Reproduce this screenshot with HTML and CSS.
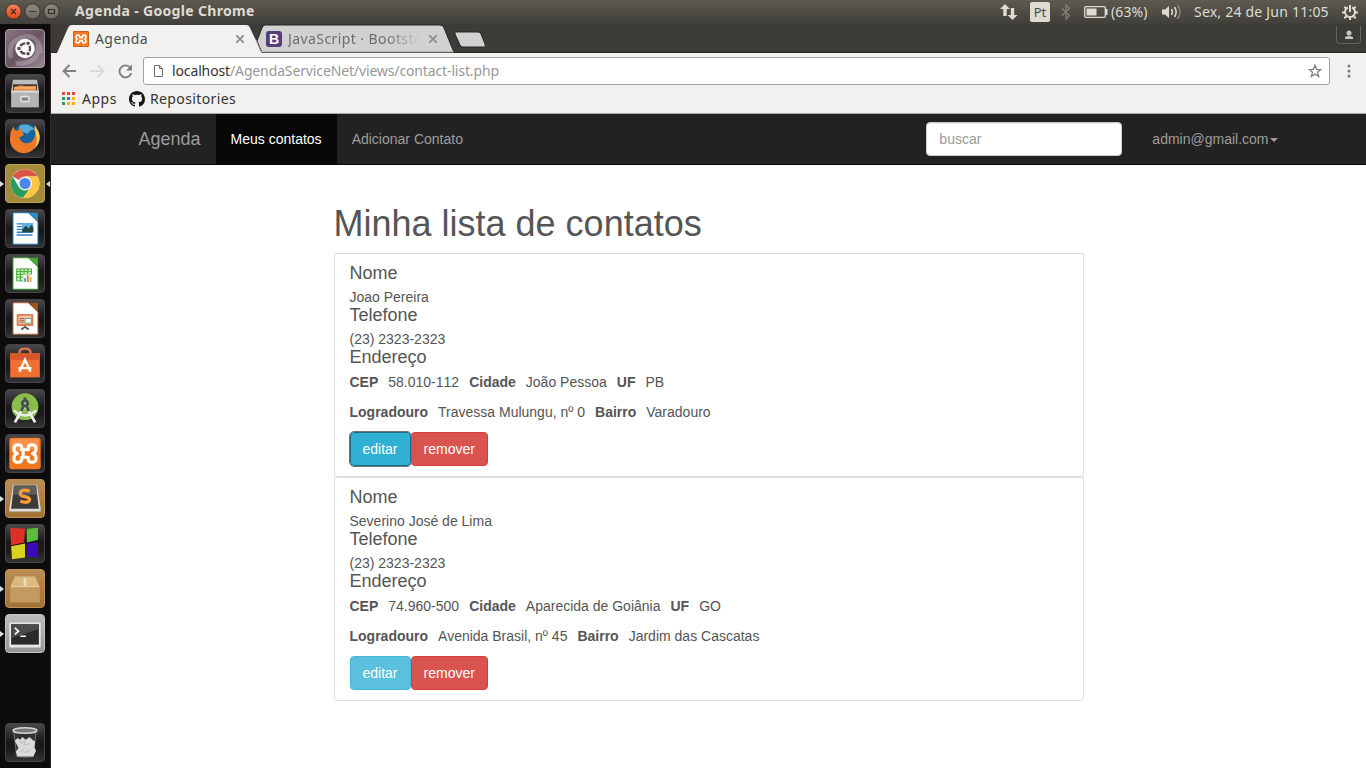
FILE: index.html
```html
<!DOCTYPE html>
<html lang="pt-BR">
<head>
<meta charset="utf-8">
<title>Agenda</title>
<link rel="stylesheet" href="styles.css">
</head>
<body>
<header class="panel">
  <div class="window-buttons">
    <svg width="60" height="24" viewBox="0 0 60 24">
      <defs><linearGradient id="gr" x2="0" y2="1"><stop stop-color="#8b8981"/><stop offset="1" stop-color="#6a6861"/></linearGradient>
      <linearGradient id="rd" x2="0" y2="1"><stop stop-color="#f58563"/><stop offset="1" stop-color="#de4514"/></linearGradient></defs>
      <circle cx="13.500" cy="11.500" r="7.700" fill="url(#rd)" stroke="#33322d"/>
      <circle cx="32.500" cy="11.500" r="7.700" fill="url(#gr)" stroke="#33322d"/>
      <circle cx="51.500" cy="11.500" r="7.700" fill="url(#gr)" stroke="#33322d"/>
      <path d="M11 9l5 5M16 9l-5 5M29.500 11.500h6.500M48.500 9.500h6v4h-6z" fill="none" stroke="#3b2b25" stroke-width="1.200"/>
    </svg>
  </div>
  <div class="window-title">Agenda - Google Chrome</div>
  <div class="indicators">
    <svg width="18" height="16" viewBox="0 0 18 16" fill="#dfdbd2"><path d="M5 0l5 5H6.700v7H3.300V5H0zM12.500 16l-5-5h3.300V4h3.400v7H17.500z"/></svg>
    <span class="keyboard">Pt</span>
    <svg class="bluetooth" width="12" height="16" viewBox="0 0 12 16" fill="none" stroke="#85837a" stroke-width="1.200"><path d="M2 4.500l7.500 7L6 15V1l3.500 3.500-7.500 7"/></svg>
    <svg class="battery" width="24" height="12" viewBox="0 0 24 12"><rect x=".7" y=".7" width="20.600" height="10.600" rx="1" fill="none" stroke="#dfdbd2" stroke-width="1.300"/><path d="M2.500 2.500h10v7h-10zM21 3h2.500v6H21z" fill="#dfdbd2"/></svg>
    <span class="percent">(63%)</span>
    <svg class="sound" width="20" height="16" viewBox="0 0 20 16" fill="none" stroke="#dfdbd2" stroke-width="1.500"><path d="M0 5.500h3L7 2v12l-4-3.500H0z" fill="#dfdbd2" stroke="none"/><path d="M9.500 5q1.700 3 0 6M12.500 3q3.300 5 0 10"/><path d="M15.500 1q5 7 0 14" stroke="#85837a"/></svg>
    <span class="clock">Sex, 24 de Jun 11:05</span>
    <svg width="16" height="16" viewBox="0 0 16 16" fill="none" stroke="#dfdbd2"><path d="M6 3.500a5 5 0 1 0 4 0" stroke-width="2"/><path d="M8 1v7" stroke-width="2"/><path d="M8 13v3M0 8.500h3M13 8.500h3M2.300 2.800l2 2M13.700 2.800l-2 2M2.300 14.200l2-2M13.700 14.200l-2-2" stroke-width="2"/></svg>
  </div>
</header>
<div class="desktop">
<nav class="launcher">
  <div class="tile tile-dash"><svg viewBox="0 0 40 40"><path d="M5 30Q0 12 20 7Q35 5 37 25M10 36Q37 37 34 15" fill="none" stroke="#fff" stroke-opacity=".22" stroke-width="5"/><circle cx="20" cy="20" r="10.500" fill="#fff"/><circle cx="20" cy="20" r="5.500" fill="none" stroke="#594653" stroke-width="2.600"/><g fill="#594653" stroke="#fff" stroke-width="1.200"><circle cx="13.500" cy="20" r="2.500"/><circle cx="23.300" cy="14.300" r="2.500"/><circle cx="23.300" cy="25.700" r="2.500"/></g></svg></div>
  <div class="tile"><svg viewBox="0 0 40 40"><path d="M7 5h26l2 12H5z" fill="#bdbdbb"/><path d="M7 10h26v8H7z" fill="#423b35"/><path d="M8 13l8-2 3 1h13v6H8z" fill="#e98c45"/><path d="M9 14h22" stroke="#ffd29b"/><path d="M5 17h30v18H5z" fill="#b3b3b1"/><path d="M5 17h30v2H5z" fill="#ddd"/><rect x="15.500" y="23" width="9" height="6" rx="1.500" fill="#aaa" stroke="#fff"/><path d="M17 26h6" stroke="#555"/></svg></div>
  <div class="tile"><svg viewBox="0 0 40 40"><circle cx="21" cy="19" r="15" fill="#17629c"/><path d="M14 6q10-4 17 5-5-2-8 4-5-3-10 0z" fill="#57aad6"/><path d="M32 8q8 12-1 22-7 8-17 5Q2 30 4 17q0-6 4-10 0 4 3 5 3-3 6-2-1 4 2 6l-5 3q1 5 6 6 6 1 9-4 4-6 0-13 3 2 4 6 1-6-3-10z" fill="#ed7827"/><path d="M30 6q11 12 1 24 3-8 1-14-1-5-2-10z" fill="#ffd553"/></svg></div>
  <div class="tile tile-chrome running active"><svg viewBox="0 0 40 40"><circle cx="20" cy="20" r="15.500" fill="#fff"/><path d="M20 20L6.600 12.300A15.500 15.500 0 0 1 33.400 12.300H20z" fill="#dc5548"/><path d="M6.600 12.300A15.500 15.500 0 0 0 18 35.400L26.500 23.500 13.500 23.800z" fill="#279e5c"/><path d="M33.400 12.300A15.500 15.500 0 0 1 18 35.400L26.700 23.800 20 12.300z" fill="#fcc642"/><circle cx="20" cy="20" r="7.600" fill="#f3f1e9"/><circle cx="20" cy="20" r="6" fill="#4b86ed"/></svg></div>
  <div class="tile"><svg viewBox="0 0 40 40"><path d="M7 3h17l10 10v24H7z" fill="#fff" stroke="#1679b8"/><path d="M23 3h11v10z" fill="#2e8bbe"/><path d="M11 15h8M11 18h8M11 21h8M11 24h17M11 27h17" stroke="#2d82bd" stroke-width="1.500"/><path d="M17 14h12v10H17z" fill="#5cb2df"/><path d="M17 21l4-4 3 3 3-4 2 3v5H17z" fill="#234543"/></svg></div>
  <div class="tile"><svg viewBox="0 0 40 40"><path d="M7 3h17l10 10v24H7z" fill="#fff" stroke="#32a023"/><path d="M23 3h11v10z" fill="#49a935"/><path d="M11 15h16v12H11z" fill="#d4efc4"/><path d="M11 15h16v13H11zM15 15v13M19 15v13M23 15v13M11 18h16M11 21h16M11 24h16" fill="none" stroke="#38a32b"/><path d="M18 21h10v9H18z" fill="#eef7fb"/><path d="M20 25v4" stroke="#4799d1" stroke-width="2"/><path d="M23 22v7" stroke="#e27a30" stroke-width="2"/><path d="M26 24v5" stroke="#d9b437" stroke-width="2"/></svg></div>
  <div class="tile"><svg viewBox="0 0 40 40"><path d="M7 3h17l10 10v24H7z" fill="#fff" stroke="#bd602f"/><path d="M23 3h11v10z" fill="#a34c20"/><path d="M12 16h16v11H12z" fill="#f4c3a8" stroke="#d78158" stroke-width="2"/><path d="M14 20h5M14 22h5M14 24h5" stroke="#ae5e39"/><path d="M20 20h7v5h-7z" fill="#fff" stroke="#5d9f7b"/><path d="M20 28v2M16 32l4-3 4 3" fill="none" stroke="#555" stroke-width="2"/></svg></div>
  <div class="tile"><svg viewBox="0 0 40 40"><path d="M14 14V8q0-4 6-4t6 4v6" fill="none" stroke="#df7452" stroke-width="2.500"/><path d="M4 9h32v26H4z" fill="#ef7132"/><path d="M4 9h32v7H4z" fill="#d9562b"/><path d="M14 29l6-13 6 13M13 25h14" fill="none" stroke="#fff" stroke-width="2.600"/></svg></div>
  <div class="tile"><svg viewBox="0 0 40 40"><circle cx="20" cy="18" r="14.500" fill="#8abd4b"/><path d="M19 18L9 35M21 18l10 17" stroke="#eee" stroke-width="3"/><path d="M8 22q12 11 24 0" fill="none" stroke="#ededed" stroke-width="2.500"/><circle cx="20" cy="14.500" r="3" fill="#9cbd71" stroke="#43504b" stroke-width="3"/><path d="M20 8v3M18 18l-2 5M22 18l2 5" stroke="#43504b" stroke-width="3"/></svg></div>
  <div class="tile"><svg viewBox="0 0 40 40"><rect x="3" y="3" width="34" height="34" rx="3" fill="#f37620"/><path d="M5 4h30v11q-15 1-30 4z" fill="#ffac70" opacity=".5"/><path d="M16.500 16v-2q0-3.500-3.500-3.500-5 0-5 4.500 0 4 4 5-4 1-4 5 0 4.500 5 4.500 3.500 0 3.500-3.500v-2h7v2q0 3.500 3.500 3.500 5 0 5-4.500 0-4-4-5 4-1 4-5 0-4.500-5-4.500-3.500 0-3.500 3.500v2zM18 17v6" fill="none" stroke="#fff" stroke-width="3.400" stroke-linejoin="round"/></svg></div>
  <div class="tile tile-sublime running"><svg viewBox="0 0 40 40"><path d="M7 5h26l4 26v3H3v-3z" fill="#ddd"/><path d="M8 6h24l3 25H5z" fill="#3b3b3a"/><path d="M8 6h24l1 10H7z" fill="#5d5d5b"/><path d="M25 12q-10-3-10 3 0 2 5 3t5 3q-1 5-10 2" fill="none" stroke="#ff9b36" stroke-width="3.500"/></svg></div>
  <div class="tile"><svg viewBox="0 0 40 40"><path d="M4 3l16 1-1 15-14 3z" fill="#df3027"/><path d="M22 4l12-1v13l-12 3z" fill="#58be3b"/><path d="M5 23l15-3v15L6 37z" fill="#d9d122"/><path d="M22 20l12-1v16l-12-1z" fill="#3a08bd"/></svg></div>
  <div class="tile tile-box running"><svg viewBox="0 0 40 40"><path d="M9 7h22l5 12v16H4V19z" fill="#c69b61"/><path d="M9 7h22l5 11H4z" fill="#dab880"/><path d="M5 18h30" stroke="#ecd5aa"/><path d="M5 19h30v15H5z" fill="#c59a60"/><path d="M18.500 9h3v9l-1.500-1-1.500 1z" fill="#eddcbd"/></svg></div>
  <div class="tile tile-terminal running"><svg viewBox="0 0 40 40"><rect x="3" y="8" width="34" height="27" rx="1" fill="#e6e6e6"/><path d="M5 10h30v22H5z" fill="#292b2b"/><path d="M5 10h30v5L5 25z" fill="#4b4d4c"/><path d="M9 14l4 3.500-4 3.500M15 23h6" fill="none" stroke="#fff" stroke-width="1.700"/></svg></div>
  <div class="tile tile-trash"><svg viewBox="0 0 40 40"><path d="M8 8h24l-3 27q-9 2-18 0z" fill="#303232" stroke="#777978"/><path d="M9 18l3-3 3 2 2-3 4 3 4-3 3 3 3 2-1 6 2 4-3 6H12l-2-5 3-4z" fill="#dadada"/><path d="M14 18l2 3 4-3-1 5 7-2M14 30l4-2 2 3 6-3" fill="none" stroke="#bbb"/><ellipse cx="20" cy="7" rx="13" ry="3" fill="#777978" stroke="#d5d5d5" stroke-width="1.600"/></svg></div>
</nav>
<main class="browser">
  <div class="tabstrip">
    <svg class="tab-shapes" width="1315" height="29" viewBox="51 24 1315 29">
      <path d="M51 52.500h1315" stroke="#292824"/>
      <path d="M257 41l5-13q1-3 3-3h175q3 0 4 3l10 24.500H262z" fill="#d3d1cf" stroke="#292824"/>
      <path d="M455 32h23q2 0 3 2l4 10q1 3-1 3h-21q-2 0-3-2l-5-11z" fill="#d3d1cf" stroke="#292824"/>
      <path d="M57 53l11-25q1-3 4-3h174q3 0 4 3l12 25z" fill="#f2f1f0"/>
      <path d="M256 40l5 12h193" fill="none" stroke="#a09e9b"/>
    </svg>
    <div class="tab tab-current">
      <svg width="16" height="16" viewBox="0 0 40 40"><rect width="40" height="40" rx="3" fill="#c9590f"/><rect x="2" y="2" width="36" height="36" fill="#f47a25"/><path d="M16.500 16v-2q0-4-4-4-5 0-5 5 0 4 4 5-4 1-4 5 0 5 5 5 4 0 4-4v-2h7v2q0 4 4 4 5 0 5-5 0-4-4-5 4-1 4-5 0-5-5-5-4 0-4 4v2z" fill="none" stroke="#fff" stroke-width="4"/></svg>
      <span class="tab-label">Agenda</span>
      <svg class="close" width="8" height="8" viewBox="0 0 8 8"><path d="M0 0l8 8M8 0L0 8"/></svg>
    </div>
    <div class="tab tab-other">
      <span class="bootstrap-icon">B</span>
      <span class="tab-label faded">JavaScript · Bootstr</span>
      <svg class="close" width="8" height="8" viewBox="0 0 8 8"><path d="M0 0l8 8M8 0L0 8"/></svg>
    </div>
    <div class="profile"><svg width="10" height="10" viewBox="0 0 10 10" fill="#c9c7c3"><circle cx="5" cy="3" r="2.500"/><path d="M1 9V7q4-2 8 0v2z"/></svg></div>
  </div>
  <div class="toolbar">
    <svg width="15" height="14" viewBox="0 0 15 14" fill="none" stroke="#7f7f7e" stroke-width="1.800"><path d="M14 7H1.500M7.500 1l-6 6 6 6"/></svg>
    <svg width="15" height="14" viewBox="0 0 15 14" fill="none" stroke="#d9d8d7" stroke-width="1.800"><path d="M0 7h13.500M7.500 1l6 6-6 6"/></svg>
    <svg width="15" height="15" viewBox="0 0 15 15"><path d="M12.500 4A6 6 0 1 0 13.300 9" fill="none" stroke="#7f7f7e" stroke-width="1.900"/><path d="M14 .5v6H8z" fill="#7f7f7e"/></svg>
    <div class="address">
      <svg width="9" height="12" viewBox="0 0 9 12" fill="none" stroke="#6e6e6e"><path d="M.5.5h5l3 3v8h-8zM5.500.5v3h3"/></svg>
      <span class="url"><b>localhost</b>/AgendaServiceNet/views/contact-list.php</span>
      <svg class="star" width="14" height="14" viewBox="0 0 14 14" fill="none" stroke="#7f7f7e" stroke-width="1.300"><path d="M7 1.300l1.600 4 4.200.2-3.300 2.700 1.200 4.200L7 10.100l-3.700 2.300 1.200-4.200L1.200 5.500l4.200-.2z"/></svg>
    </div>
    <svg class="menu" width="4" height="14" viewBox="0 0 4 14" fill="#7f7f7e"><circle cx="2" cy="2" r="1.600"/><circle cx="2" cy="7" r="1.600"/><circle cx="2" cy="12" r="1.600"/></svg>
  </div>
  <div class="bookmarks">
    <svg width="13" height="13" viewBox="0 0 13 13"><path d="M0 0h3v3H0zM5 0h3v3H5zM10 0h3v3h-3z" fill="#e8453c"/><path d="M0 5h3v3H0z" fill="#2f9e5a"/><path d="M5 5h3v3H5z" fill="#3478e5"/><path d="M10 5h3v3h-3zM5 10h3v3H5zM10 10h3v3h-3z" fill="#f4b400"/><path d="M0 10h3v3H0z" fill="#2f9e5a"/></svg>
    <span class="bm-apps">Apps</span>
    <svg width="16" height="16" viewBox="0 0 16 16"><path fill="#161514" d="M8 0C3.580 0 0 3.580 0 8c0 3.540 2.290 6.530 5.470 7.590.4.070.55-.17.55-.38 0-.19-.01-.82-.01-1.490-2.010.37-2.530-.49-2.690-.94-.09-.23-.48-.94-.82-1.130-.28-.15-.68-.52-.01-.53.63-.01 1.080.58 1.230.82.72 1.210 1.870.87 2.330.66.070-.52.280-.87.510-1.070-1.780-.2-3.640-.89-3.640-3.950 0-.87.310-1.590.82-2.150-.08-.2-.36-1.020.080-2.120 0 0 .67-.21 2.200.82.64-.18 1.320-.27 2-.27s1.360.090 2 .27c1.530-1.040 2.200-.82 2.200-.82.440 1.100.16 1.920.080 2.120.51.560.82 1.270.82 2.150 0 3.070-1.870 3.750-3.650 3.950.29.25.54.73.54 1.480 0 1.070-.01 1.930-.01 2.200 0 .21.150.46.55.38A8.010 8.010 0 0 0 16 8c0-4.420-3.580-8-8-8z"/></svg>
    <span class="bm-repos">Repositories</span>
  </div>
  <div class="page">
    <nav class="navbar"><div class="container">
      <a class="brand">Agenda</a>
      <a class="nav-link selected">Meus contatos</a>
      <a class="nav-link">Adicionar Contato</a>
      <input class="search" type="text" placeholder="buscar">
      <a class="nav-link user">admin@gmail.com<i class="caret"></i></a>
    </div></nav>
    <section class="content">
      <h1>Minha lista de contatos</h1>
      <article class="contact">
        <h4>Nome</h4><p>Joao Pereira</p>
        <h4>Telefone</h4><p>(23) 2323-2323</p>
        <h4>Endereço</h4>
        <div class="row"><b>CEP</b><span class="zip">58.010-112</span><b>Cidade</b><span>João Pessoa</span><b>UF</b><span>PB</span></div>
        <div class="row"><b>Logradouro</b><span>Travessa Mulungu, nº 0</span><b>Bairro</b><span>Varadouro</span></div>
        <div class="actions"><button class="btn btn-info focused">editar</button><button class="btn btn-danger">remover</button></div>
      </article>
      <article class="contact">
        <h4>Nome</h4><p>Severino José de Lima</p>
        <h4>Telefone</h4><p>(23) 2323-2323</p>
        <h4>Endereço</h4>
        <div class="row"><b>CEP</b><span class="zip">74.960-500</span><b>Cidade</b><span>Aparecida de Goiânia</span><b>UF</b><span>GO</span></div>
        <div class="row"><b>Logradouro</b><span>Avenida Brasil, nº 45</span><b>Bairro</b><span>Jardim das Cascatas</span></div>
        <div class="actions"><button class="btn btn-info">editar</button><button class="btn btn-danger">remover</button></div>
      </article>
    </section>
  </div>
</main>
</div>
</body>
</html>
```
FILE: styles.css
```css
* { box-sizing: border-box; }
html, body { margin: 0; height: 768px; overflow: hidden; }
body { display: flex; flex-direction: column; background: #fff; font-family: "Noto Sans", sans-serif; }
svg { display: block; flex: none; }

.panel { height: 24px; flex: none; display: flex; align-items: center; background: linear-gradient(#5d5a50, #403f3a); color: #dfdbd2; white-space: nowrap; }
.window-buttons { width: 75px; }
.window-title { font-weight: 700; font-size: 14px; line-height: 18px; letter-spacing: .33px; padding-bottom: 2px; }
.indicators { margin-left: auto; padding-right: 8px; display: flex; align-items: center; font-size: 14px; }
.keyboard { width: 20px; height: 20px; margin-left: 12px; border-radius: 2px; background: #dfdbd2; color: #4b4943; font-size: 13px; line-height: 20px; text-align: center; }
.bluetooth { margin-left: 10px; }
.battery { margin-left: 12px; }
.percent { margin-left: 3px; width: 39px; padding-bottom: 2px; letter-spacing: .1px; }
.sound { margin-left: 12px; }
.clock { margin-left: 12px; width: 136px; padding-bottom: 2px; letter-spacing: .22px; white-space: nowrap; }
.clock + svg { margin-left: 12px; }

.desktop { flex: 1; display: flex; min-height: 0; }
.launcher { width: 51px; flex: none; padding: 5px 0 6px 5px; background: #0e0b0d; border-right: 1px solid #2d292b; display: flex; flex-direction: column; gap: 6px; }
.tile { position: relative; width: 40px; height: 39px; flex: none; border: 1px solid #454345; border-radius: 4px; background: linear-gradient(#48474a, #18181a 48%, #1d1d1e 70%, #343436); }
.tile svg { width: 38px; height: 37px; }
.tile-dash { background: linear-gradient(135deg, #8a7382, #685461 50%, #9a8893); border-color: #aa9ca6; }
.tile-chrome { background: #a58c3d; border-color: #b7a252; }
.tile-sublime, .tile-box { background: linear-gradient(#b98d55, #a27136); border-color: #c09257; }
.tile-terminal { background: linear-gradient(#bbb, #969696); border-color: #c4c4c4; }
.tile-trash { margin-top: auto; }
.running::before { content: ""; position: absolute; left: -6px; top: 16px; border: 3px solid transparent; border-left: 4px solid #ddd; border-right: 0; }
.active::after { content: ""; position: absolute; right: -6px; top: 16px; border: 3px solid transparent; border-right: 4px solid #ddd; border-left: 0; }

.browser { flex: 1; display: flex; flex-direction: column; min-width: 0; }
.tabstrip { position: relative; height: 29px; flex: none; display: flex; background: #3c3b37; }
.tab-shapes { position: absolute; left: 0; top: 0; }
.tab { position: relative; display: flex; align-items: center; height: 30px; font-size: 14px; color: #4c4c4c; white-space: nowrap; }
.tab-current { width: 193px; margin-left: 22px; }
.tab-other { width: 172px; color: #6f6e6d; }
.tab-label { margin-left: 6px; padding-bottom: 2px; letter-spacing: .42px; }
.faded { width: 135px; -webkit-mask-image: linear-gradient(to right, #000 73%, transparent 98%); mask-image: linear-gradient(to right, #000 73%, transparent 98%); }
.close { margin-left: auto; margin-right: 22px; fill: none; stroke: #8d8c8b; stroke-width: 1.7; }
.tab-other .close { margin-right: 1px; }
.bootstrap-icon { width: 16px; height: 16px; border-radius: 3px; background: #563d7c; color: #fff; font: bold 14px/16px "Liberation Sans", sans-serif; text-align: center; }
.profile { position: absolute; right: 5px; top: 2px; width: 25px; height: 18px; display: flex; align-items: center; justify-content: center; border: 1px solid #65645f; border-top: 0; border-radius: 0 0 4px 4px; }
.toolbar { height: 36px; flex: none; padding: 0 16px 0 11px; display: flex; align-items: center; gap: 13px; background: #f2f1f0; }
.address { flex: 1; height: 28px; margin-left: -3px; padding: 0 7px 0 10px; display: flex; align-items: center; border: 1px solid #a5a3a1; border-radius: 3px; background: #fff; color: #989898; }
.url { margin-left: 9px; padding-bottom: 1px; font-size: 14px; letter-spacing: -.13px; }
.url b { font-weight: 400; color: #333; }
.star { margin-left: auto; }
.menu { margin-left: 4px; margin-right: -1px; }
.bookmarks { height: 25px; flex: none; padding: 0 0 5px 11px; display: flex; align-items: center; border-bottom: 1px solid #aaa8a6; background: #f2f1f0; color: #333; font-size: 14px; line-height: 18px; }
.bm-apps { width: 47px; margin-left: 7px; letter-spacing: .5px; }
.bm-repos { margin-left: 5px; letter-spacing: .38px; }

.page { flex: 1; background: #fff; color: #555; font: 14px/20px "Liberation Sans", Arial, sans-serif; }
.navbar { height: 51px; background: #222; border-bottom: 1px solid #080808; }
.container { width: 1170px; height: 50px; margin: 0 auto; display: flex; align-items: center; }
.brand, .nav-link { height: 50px; padding: 15px; color: #9d9d9d; white-space: nowrap; }
.brand { font-size: 18px; }
.container .selected { background: #080808; color: #fff; }
.search { width: 196px; height: 34px; margin: 0 15px 0 auto; padding: 6px 12px; border: 1px solid #ccc; border-radius: 4px; box-shadow: inset 0 1px 1px rgba(0,0,0,.075); font: inherit; }
.search::placeholder { color: #999; }
.caret { display: inline-block; margin-left: 1px; margin-right: 1px; vertical-align: middle; border: 4px solid transparent; border-top-color: #9d9d9d; border-bottom: 0; }
.content { width: 750px; margin: 39px auto 0; }
h1 { margin: 0 0 9px; font-size: 36px; line-height: 40px; font-weight: 500; }
.contact { height: 224px; padding: 10px 15px; border: 1px solid #ddd; border-radius: 0 0 4px 4px; }
h4 { margin: 0 0 5px; font-size: 18px; line-height: 19px; font-weight: 500; }
p { margin: 0; line-height: 18px; }
.row { display: flex; gap: 10px; margin-bottom: 10px; }
.zip { font-kerning: none; }
.actions { display: flex; }
.btn { height: 34px; padding: 6px 12px; border: 1px solid; border-radius: 4px; color: #fff; font: inherit; }
.btn-info { background: #5bc0de; border-color: #46b8da; }
.btn-danger { background: #d9534f; border-color: #d43f3a; }
.focused { position: relative; background: #31b0d5; border-color: #1b6d85; outline: 1px solid #6c7577; }
```
